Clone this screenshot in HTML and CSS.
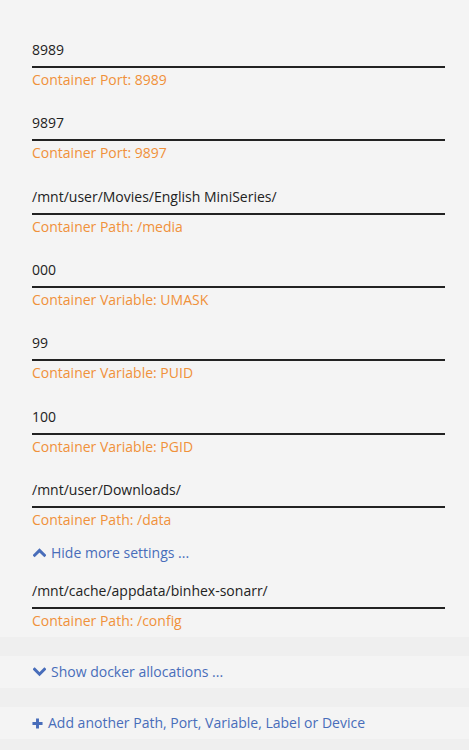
FILE: index.html
```html
<!DOCTYPE html>
<html lang="en">
<head>
    <meta charset="UTF-8">
    <meta name="viewport" content="width=device-width, initial-scale=1.0">
    <title>Container settings</title>
    <link rel="stylesheet" href="styles.css">
</head>
<body>
    <div class="settings">
        <div class="field">
            <div class="value">8989</div>
            <div class="hint">Container Port: 8989</div>
        </div>
        <div class="field">
            <div class="value">9897</div>
            <div class="hint">Container Port: 9897</div>
        </div>
        <div class="field">
            <div class="value">/mnt/user/Movies/English MiniSeries/</div>
            <div class="hint">Container Path: /media</div>
        </div>
        <div class="field">
            <div class="value">000</div>
            <div class="hint">Container Variable: UMASK</div>
        </div>
        <div class="field">
            <div class="value">99</div>
            <div class="hint">Container Variable: PUID</div>
        </div>
        <div class="field">
            <div class="value">100</div>
            <div class="hint">Container Variable: PGID</div>
        </div>
        <div class="field">
            <div class="value">/mnt/user/Downloads/</div>
            <div class="hint">Container Path: /data</div>
        </div>
        <div class="toggle">
            <a href="#">
                <svg class="icon" viewBox="0 0 12 12"><path d="M1.5 8.5 L6 4 L10.5 8.5" /></svg>Hide more settings ...
            </a>
        </div>
        <div class="field last">
            <div class="value">/mnt/cache/appdata/binhex-sonarr/</div>
            <div class="hint">Container Path: /config</div>
        </div>
    </div>

    <div class="rows">
        <div class="spacer"></div>
        <div class="row">
            <a href="#">
                <svg class="icon" viewBox="0 0 12 12"><path d="M1.5 4 L6 8.5 L10.5 4" /></svg>Show docker allocations ...
            </a>
        </div>
        <div class="spacer"></div>
        <div class="row">
            <a href="#">
                <svg class="icon plus" viewBox="0 0 12 12"><path d="M6 0.5 V11.5 M0.5 6 H11.5" /></svg>Add another Path, Port, Variable, Label or Device
            </a>
        </div>
        <div class="spacer"></div>
    </div>
</body>
</html>
```

FILE: styles.css
```css
body {
    margin: 0;
    padding: 0;
    background: #f4f4f4;
    font-family: "Open Sans", Arial, sans-serif;
    font-size: 14px;
    color: #222;
}
.settings {
    padding: 38px 24px 0 32px;
}
.field {
    margin-bottom: 19.33px;
}
.field.last {
    margin-bottom: 4px;
}
.value {
    height: 28px;
    line-height: 24px;
    border-bottom: 2px solid #222;
    white-space: nowrap;
}
.hint {
    line-height: 24px;
    color: #f0913a;
}
.toggle {
    margin: -8.33px 0 16px;
    line-height: 20px;
}
a {
    color: #486dba;
    text-decoration: none;
}
.icon {
    width: 13px;
    height: 13px;
    margin: 0 5px 0 1px;
    vertical-align: -1px;
    fill: none;
    stroke: #486dba;
    stroke-width: 2.8;
    stroke-linecap: square;
}
.plus {
    width: 11px;
    height: 11px;
    margin: 0 5px 0 0;
    vertical-align: -1px;
    stroke-width: 3.2;
    stroke-linecap: butt;
}
.spacer {
    height: 19px;
    background: #efefef;
}
.row {
    height: 32px;
    line-height: 32px;
    padding-left: 32px;
}
```
